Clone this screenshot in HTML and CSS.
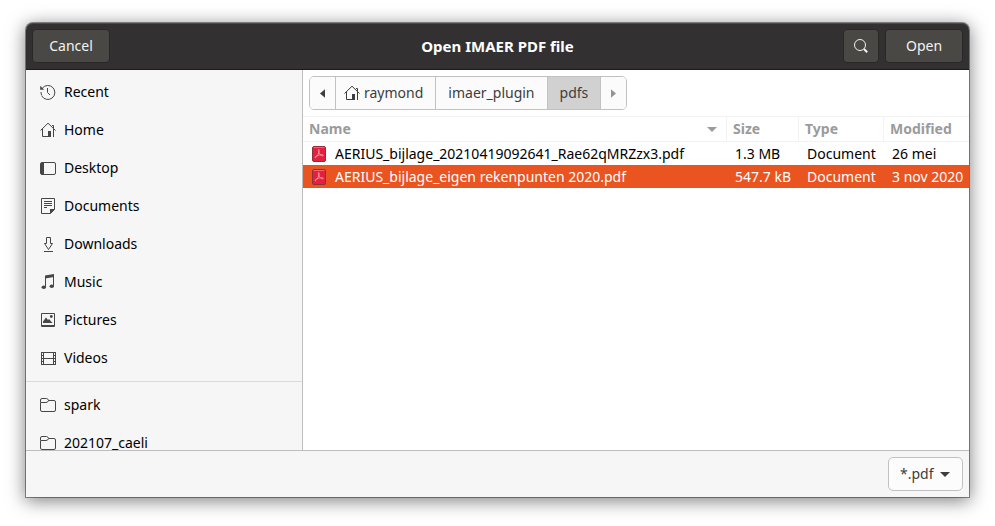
FILE: index.html
```html
<!DOCTYPE html>
<html lang="en">
<head>
<meta charset="utf-8">
<title>Open IMAER PDF file</title>
<link rel="stylesheet" href="styles.css">
</head>
<body>
<svg class="defs" aria-hidden="true">
  <symbol id="home" viewBox="0 0 16 16"><path d="M.5 8.5 8 1.2l7.5 7.3M2.5 7v7.5h5.500M13.500 7v8M12 3.500h1.500V6" fill="none" stroke="currentColor"/><path d="M8 9h3v6H8z" fill="currentColor"/></symbol>
  <symbol id="folder" viewBox="0 0 16 16"><path d="M.5 5V3q0-1.500 1.500-1.500h4.500Q8 1.500 8.500 3.500h5.500q1.500 0 1.500 1.500v8q0 1.500-1.500 1.500H2Q.5 14.500.5 13V5.500h5.500q2 0 2.500-2" fill="none" stroke="currentColor"/></symbol>
  <symbol id="pdf" viewBox="0 0 16 16"><rect x="1.500" y=".5" width="13" height="15" rx="1.500" fill="#e5203f" stroke="#8f2f3c"/><path d="M2.500 1.500h11" stroke="#f4637a"/><path d="M7.700 3.500c-1 1.500.5 3.500 1.300 4.800 1 1.300 3 2 3.300 1.200.2-1-2-1-4-.5-2 .4-4.500 1.600-4.300 2.500.5.800 2.300-1.300 3.200-3.500C8 6.200 8.700 4 7.700 3.500z" fill="none" stroke="#ffb3bd" stroke-width=".7"/></symbol>
</svg>
<main class="dialog">
  <header class="titlebar">
    <button class="dark-btn text-btn" type="button">Cancel</button>
    <h1>Open IMAER PDF file</h1>
    <div class="actions">
      <button class="dark-btn search-btn" type="button" aria-label="Search"><svg class="icon" viewBox="0 0 16 16"><circle cx="7" cy="7" r="5.500" fill="none" stroke="currentColor"/><path d="m11 11 3.200 3.200" stroke="currentColor" stroke-width="2"/></svg></button>
      <button class="dark-btn text-btn" type="button">Open</button>
    </div>
  </header>
  <div class="body">
    <nav class="sidebar" aria-label="Places">
      <ul>
        <li><a href="#"><svg class="icon" viewBox="0 0 16 16"><path d="M2.300 4.200A7 7 0 1 1 1.800 12M1 8q0 2 .8 3.500" fill="none" stroke="currentColor"/><path d="M.2 1.800v4h4z" fill="currentColor"/><path d="M7.500 4v4.500L10 11" fill="none" stroke="currentColor"/></svg>Recent</a></li>
        <li><a href="#"><svg class="icon"><use href="#home"/></svg>Home</a></li>
        <li><a href="#"><svg class="icon" viewBox="0 0 16 16"><rect x=".5" y="2.500" width="15" height="12" rx="1.500" fill="none" stroke="currentColor"/><path d="M1 3h3v11H1z" fill="currentColor"/></svg>Desktop</a></li>
        <li><a href="#"><svg class="icon" viewBox="0 0 16 16"><path d="M1.500.5h13v11l-4 4h-9zM4 3.500h8M4 5.500h8M4 7.500h8M4 9.500h3" fill="none" stroke="currentColor"/><path d="M10 11h5l-5 5z" fill="currentColor"/></svg>Documents</a></li>
        <li><a href="#"><svg class="icon" viewBox="0 0 16 16"><path d="M6.500 1.500h4v6h2l-4 6-4-6h2zM4 15.500h9" fill="none" stroke="currentColor"/></svg>Downloads</a></li>
        <li><a href="#"><svg class="icon" viewBox="0 0 16 16"><path d="M5 1.500 14 0v3L5 4.500z" fill="currentColor"/><path d="M5.500 3v10M13.500 1v11" stroke="currentColor"/><ellipse cx="3.800" cy="13.300" rx="2.200" ry="1.700" fill="currentColor"/><ellipse cx="11.800" cy="12.300" rx="2.200" ry="1.700" fill="currentColor"/></svg>Music</a></li>
        <li><a href="#"><svg class="icon" viewBox="0 0 16 16"><path d="M1.500 1.500h13v13h-13zM2 13.500h12" fill="none" stroke="currentColor"/><path d="M3 11V9.500L6 5.500 8 8l1-1 3.500 4z" fill="currentColor"/><circle cx="11.300" cy="4.500" r="1.400" fill="currentColor"/></svg>Pictures</a></li>
        <li><a href="#"><svg class="icon" viewBox="0 0 16 16"><path d="M3.500 2.500h10v12h-10zM3.500 8.500h10" fill="none" stroke="currentColor"/><path d="M1.500 2v13M15.500 2v13" stroke="currentColor"/><path d="M1 2.500h3M1 5.500h3M1 8.500h3M1 11.500h3M1 14.500h3M13 2.500h3M13 5.500h3M13 8.500h3M13 11.500h3M13 14.500h3" stroke="currentColor"/></svg>Videos</a></li>
      </ul>
      <ul class="bookmarks">
        <li><a href="#"><svg class="icon"><use href="#folder"/></svg>spark</a></li>
        <li><a href="#"><svg class="icon"><use href="#folder"/></svg>202107_caeli</a></li>
      </ul>
    </nav>
    <section class="files">
      <div class="pathbar">
        <button type="button" class="arrow" aria-label="Back"><svg viewBox="0 0 6 10"><path d="M6 0v10L0 5z" fill="currentColor"/></svg></button>
        <button type="button" class="crumb with-icon"><svg class="icon"><use href="#home"/></svg>raymond</button>
        <button type="button" class="crumb">imaer_plugin</button>
        <button type="button" class="crumb current">pdfs</button>
        <button type="button" class="arrow next" aria-label="Forward" disabled><svg viewBox="0 0 6 10"><path d="M0 0v10l6-5z" fill="currentColor"/></svg></button>
      </div>
      <table>
        <colgroup><col><col class="size"><col class="type"><col class="modified"></colgroup>
        <thead>
          <tr><th><span class="sorted">Name<svg viewBox="0 0 10 5"><path d="M0 0h10L5 5z" fill="currentColor"/></svg></span></th><th>Size</th><th>Type</th><th>Modified</th></tr>
        </thead>
        <tbody>
          <tr><td><span class="file"><svg class="icon"><use href="#pdf"/></svg>AERIUS_bijlage_20210419092641_Rae62qMRZzx3.pdf</span></td><td>1.3 MB</td><td>Document</td><td>26 mei</td></tr>
          <tr class="selected"><td><span class="file"><svg class="icon"><use href="#pdf"/></svg>AERIUS_bijlage_eigen rekenpunten 2020.pdf</span></td><td>547.7 kB</td><td>Document</td><td>3 nov 2020</td></tr>
        </tbody>
      </table>
    </section>
  </div>
  <footer class="footer">
    <div class="filter">
      <select aria-label="File type"><option>*.pdf</option></select>
      <svg viewBox="0 0 10 5"><path d="M0 0h10L5 5z" fill="currentColor"/></svg>
    </div>
  </footer>
</main>
</body>
</html>
```
FILE: styles.css
```css
* { box-sizing: border-box; }
body {
  margin: 0;
  height: 100vh;
  padding: 23px 26px 29px;
  background: #fff;
  color: #000;
  font: 14px/20px "Noto Sans", sans-serif;
  overflow: hidden;
}
button, select { font: inherit; margin: 0; }
ul { list-style: none; margin: 0; padding: 0; }
.defs { display: none; }
.icon { width: 16px; height: 16px; flex: none; }

.dialog {
  display: flex;
  flex-direction: column;
  height: 100%;
  border-radius: 7px 7px 0 0;
  box-shadow: 0 0 0 1px rgba(0, 0, 0, .4), 0 3px 18px 1px rgba(0, 0, 0, .5);
}
.titlebar {
  display: grid;
  grid-template-columns: 1fr auto 1fr;
  align-items: center;
  padding: 6px;
  background: #323030;
  border-bottom: 1px solid #1c1b1b;
  border-radius: 7px 7px 0 0;
  box-shadow: inset 0 1px #4b4949;
  color: #fff;
}
.titlebar h1 { margin: 0; font-size: 15px; line-height: 20px; }
.actions { display: flex; justify-content: flex-end; gap: 6px; }
.dark-btn {
  height: 34px;
  border: 1px solid #292727;
  border-radius: 4px;
  background: #4a4845;
  color: #f2f2f2;
}
.text-btn { width: 78px; padding: 0; }
.search-btn { width: 36px; padding: 0; display: grid; place-items: center; }

.body { flex: 1; min-height: 0; display: flex; }
.sidebar {
  width: 277px;
  flex: none;
  padding-top: 3px;
  overflow: hidden;
  background: #f6f6f6;
  border-right: 1px solid #bdbdbd;
}
.sidebar a {
  display: flex;
  align-items: center;
  gap: 8px;
  height: 38px;
  padding: 0 14px;
  color: #000;
  text-decoration: none;
}
.sidebar .icon { color: #464646; }
.bookmarks { margin-top: 4px; padding-top: 4px; border-top: 1px solid #dadada; }

.files { flex: 1; min-width: 0; background: #fff; }
.pathbar {
  display: flex;
  width: max-content;
  height: 34px;
  margin: 6px;
  border: 1px solid #c1c1c1;
  border-radius: 5px;
  overflow: hidden;
}
.pathbar button {
  border: 0;
  border-left: 1px solid #c1c1c1;
  background: #fbfbfb;
  color: #3d3d3d;
  padding: 0 12px;
}
.pathbar .arrow { width: 26px; padding: 0; display: grid; place-items: center; }
.pathbar .arrow:first-child { width: 25px; border-left: 0; }
.pathbar .arrow svg { width: 5px; height: 9px; }
.pathbar .next { color: #949494; }
.pathbar .with-icon { display: flex; align-items: center; gap: 4px; padding: 0 12px 0 8px; }
.pathbar .current { background: #d1d1d1; }

table { width: 100%; table-layout: fixed; border-collapse: separate; border-spacing: 0; }
.size { width: 72px; }
.type { width: 85px; }
.modified { width: 85px; }
th, td { padding: 0 0 0 8px; text-align: left; white-space: nowrap; }
th {
  height: 26px;
  padding-left: 6px;
  border: 1px solid #f2f2f2;
  border-width: 1px 1px 1px 0;
  color: #9b9b9b;
}
th:last-child { border-right: 0; }
td { height: 23px; }
.sorted { display: flex; align-items: center; justify-content: space-between; padding-right: 9px; }
.sorted svg { width: 10px; height: 5px; }
.file { display: flex; align-items: center; gap: 8px; }
.selected { background: #e95420; color: #fff; }

.footer {
  display: flex;
  justify-content: flex-end;
  padding: 6px;
  background: #f6f6f6;
  border-top: 1px solid #bdbdbd;
}
.filter { position: relative; color: #3d3d3d; }
.filter select {
  appearance: none;
  width: 75px;
  height: 34px;
  padding: 0 24px 0 11px;
  border: 1px solid #c1c1c1;
  border-radius: 5px;
  background: #fcfcfc;
  color: inherit;
}
.filter svg {
  position: absolute;
  right: 13px;
  top: 15px;
  width: 10px;
  height: 5px;
  pointer-events: none;
}
```
